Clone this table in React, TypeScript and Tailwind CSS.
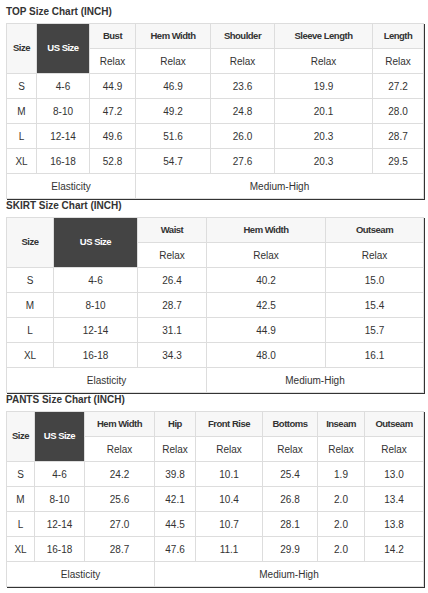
type Chart = {
  title: string;
  cols: number[];
  measures: string[];
  rows: string[][];
};

const charts: Chart[] = [
  {
    title: "TOP Size Chart (INCH)",
    cols: [30, 53, 46, 75, 64, 98, 51],
    measures: ["Bust", "Hem Width", "Shoulder", "Sleeve Length", "Length"],
    rows: [
      ["S", "4-6", "44.9", "46.9", "23.6", "19.9", "27.2"],
      ["M", "8-10", "47.2", "49.2", "24.8", "20.1", "28.0"],
      ["L", "12-14", "49.6", "51.6", "26.0", "20.3", "28.7"],
      ["XL", "16-18", "52.8", "54.7", "27.6", "20.3", "29.5"],
    ],
  },
  {
    title: "SKIRT Size Chart (INCH)",
    cols: [47, 84, 69, 119, 98],
    measures: ["Waist", "Hem Width", "Outseam"],
    rows: [
      ["S", "4-6", "26.4", "40.2", "15.0"],
      ["M", "8-10", "28.7", "42.5", "15.4"],
      ["L", "12-14", "31.1", "44.9", "15.7"],
      ["XL", "16-18", "34.3", "48.0", "16.1"],
    ],
  },
  {
    title: "PANTS Size Chart (INCH)",
    cols: [28, 50, 70, 41, 67, 55, 47, 59],
    measures: ["Hem Width", "Hip", "Front Rise", "Bottoms", "Inseam", "Outseam"],
    rows: [
      ["S", "4-6", "24.2", "39.8", "10.1", "25.4", "1.9", "13.0"],
      ["M", "8-10", "25.6", "42.1", "10.4", "26.8", "2.0", "13.4"],
      ["L", "12-14", "27.0", "44.5", "10.7", "28.1", "2.0", "13.8"],
      ["XL", "16-18", "28.7", "47.6", "11.1", "29.9", "2.0", "14.2"],
    ],
  },
];

const cell = "border border-[#ddd] p-0 text-center align-middle";
const head = "font-bold text-[9.5px] tracking-[-0.5px]";

function SizeTable({ chart }: { chart: Chart }) {
  return (
    <div>
      <h3 className="text-[10px] leading-[13px] font-bold text-[#333] mb-[5px]">{chart.title}</h3>
      <div className="w-fit shadow-[1px_1px_0_#333]">
        <table className="table-fixed border-collapse text-[10px] text-[#333]">
          <colgroup>
            {chart.cols.map((w, i) => (
              <col key={i} style={{ width: w }} />
            ))}
          </colgroup>
          <tbody>
            {/* header */}
            <tr className="h-[25px]">
              <td rowSpan={2} className={`${cell} ${head} bg-[#f7f7f7]`}>
                Size
              </td>
              <td rowSpan={2} className={`${cell} ${head} bg-[#444] text-white`}>
                US Size
              </td>
              {chart.measures.map((m) => (
                <td key={m} className={`${cell} ${head} bg-[#f7f7f7]`}>
                  {m}
                </td>
              ))}
            </tr>
            <tr className="h-[25px]">
              {chart.measures.map((m) => (
                <td key={m} className={cell}>
                  Relax
                </td>
              ))}
            </tr>

            {chart.rows.map((r) => (
              <tr key={r[0]} className="h-[25px]">
                {r.map((v, i) => (
                  <td key={i} className={cell}>
                    {v}
                  </td>
                ))}
              </tr>
            ))}

            {/* elasticity */}
            <tr className="h-[25px]">
              <td colSpan={3} className={cell}>
                Elasticity
              </td>
              <td colSpan={chart.cols.length - 3} className={cell}>
                Medium-High
              </td>
            </tr>
          </tbody>
        </table>
      </div>
    </div>
  );
}

export default function App() {
  return (
    <main className="bg-white min-h-[593px] w-[428px] pt-[5px] pl-[6px] font-['Liberation_Sans',Arial,sans-serif]">
      {charts.map((c) => (
        <SizeTable key={c.title} chart={c} />
      ))}
    </main>
  );
}
